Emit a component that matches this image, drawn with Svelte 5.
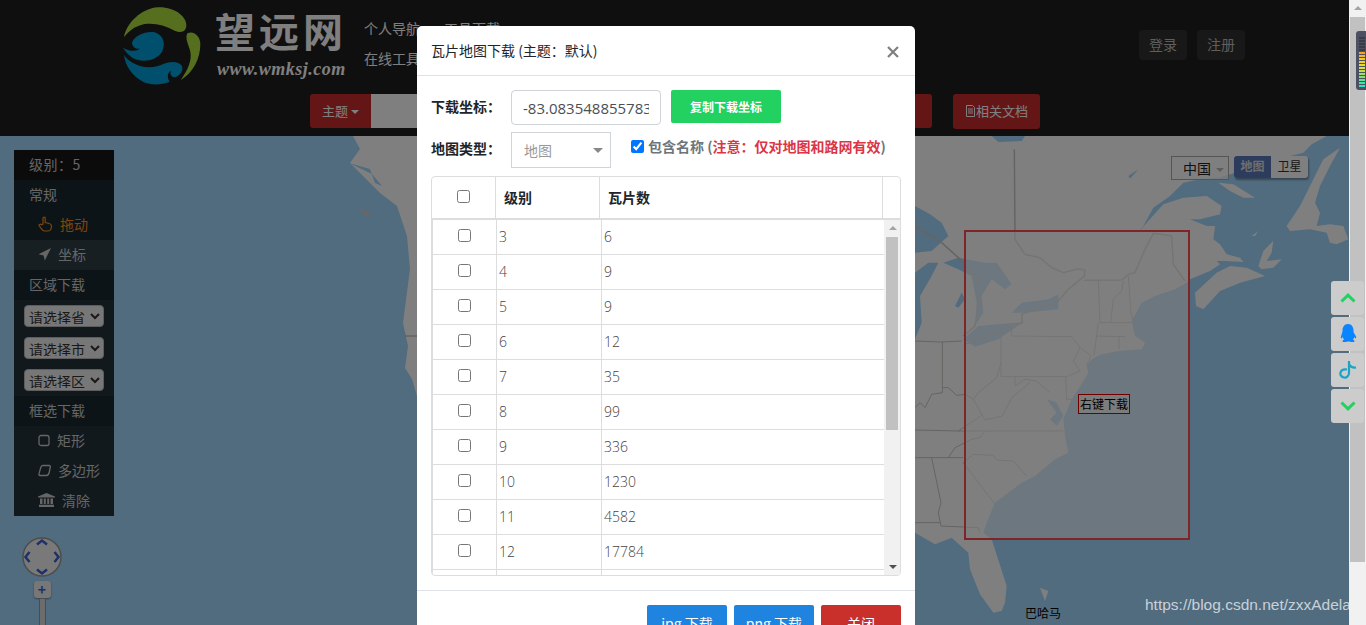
<script>
  // map outlines below were read off the screenshot at 3x, hence the helpers
  const east = (pts) => pts.map(([x, y]) => `${915 + x / 3},${y / 3}`);
  const ne = (pts) => pts.map(([x, y]) => `${1130 + x / 3},${y / 3}`);
  const poly = (pts) => east(pts).join(' ');
  const polyNe = (pts) => ne(pts).join(' ');

  const land = [
    '353,0', '360,13', '350,27', '380,57', '397,70', '407,100', '410,133', '403,187', '408,210', '405,232', '412,243', '417,260',
    '500,400',
    ...east([[0, 1190], [60, 1225], [110, 1205], [160, 1250], [165, 1300], [195, 1375], [235, 1430], [260, 1425], [270, 1400], [275, 1350], [230, 1210], [205, 1190], [215, 1160], [240, 1100], [320, 1040], [360, 1020], [420, 970], [460, 950], [450, 900], [445, 850], [470, 790], [490, 760], [520, 710], [515, 690], [530, 670], [560, 655], [610, 645], [680, 640], [690, 620], [660, 600], [650, 555], [680, 500], [720, 480], [780, 460], [815, 440]]),
    ...ne([[180, 430], [240, 405], [270, 385], [260, 375], [285, 375], [340, 378], [330, 365], [290, 355], [270, 325], [250, 310], [255, 270], [230, 270], [180, 250], [210, 250], [270, 235], [275, 210], [230, 180], [160, 185], [100, 205], [50, 260], [-5, 325], [40, 270], [70, 215], [120, 180], [160, 140], [210, 130], [265, 125], [350, 100], [430, 85], [480, 60], [520, 50], [545, 25], [590, 0]])
  ].join(' ');

  // Great Lakes and the small bays
  const waters = [
    [[230, 0], [330, 0], [320, 15], [250, 18]],
    [[0, 210], [45, 235], [80, 260], [100, 300], [50, 345], [0, 350]],
    [[0, 410], [40, 380], [70, 380], [50, 420], [15, 480], [20, 560], [0, 610]],
    [[85, 380], [130, 365], [210, 380], [245, 380], [290, 445], [270, 460], [230, 430], [200, 480], [205, 530], [180, 570], [185, 500], [170, 420], [130, 400]],
    [[120, 510], [140, 470], [150, 490], [130, 515]],
    [[145, 610], [190, 570], [325, 558], [250, 610], [180, 632]],
    [[290, 530], [320, 500], [400, 490], [430, 475], [430, 520], [330, 530]],
    [[395, 790], [425, 800], [445, 840], [425, 870], [405, 850], [425, 830]],
    [[640, 120], [670, 100], [645, 128]]
  ];
  const cuba = [[375, 1355], [400, 1365], [390, 1395]];
  const islands = [
    [[195, 470], [260, 410], [300, 390], [350, 395], [405, 420], [330, 440], [270, 465], [220, 520], [198, 510]],
    [[470, 270], [510, 210], [540, 150], [580, 70], [630, 35], [600, 90], [570, 150], [555, 200], [570, 230], [560, 270], [600, 265], [640, 270], [655, 310], [620, 325], [600, 320], [590, 290], [540, 280], [480, 285]],
    [[265, 140], [310, 145], [375, 185], [340, 185], [300, 165]],
    [[385, 390], [400, 345], [430, 315], [425, 350], [410, 375], [455, 370], [430, 395], [395, 400]],
    [[365, 300], [385, 285], [375, 300]]
  ];

  const lines = [
    [[298, 40], [300, 310], [330, 355], [375, 365], [410, 395], [445, 410], [490, 398], [510, 402], [508, 420], [460, 460], [425, 500], [390, 510], [320, 535], [322, 560], [240, 590], [150, 625]],
    [[0, 270], [80, 320], [130, 365], [185, 420], [190, 500], [180, 570], [145, 600]],
    [[508, 433], [620, 432], [640, 415], [660, 410], [690, 340], [715, 292], [770, 300], [775, 385], [810, 435]],
    [[550, 433], [555, 560], [650, 560]],
    [[625, 435], [620, 465], [595, 490], [587, 560]],
    [[640, 420], [648, 530], [655, 560]],
    [[290, 575], [290, 600], [470, 602], [495, 635], [475, 675], [495, 705], [455, 722], [258, 722], [258, 600]],
    [[550, 560], [537, 660]],
    [[540, 600], [630, 602]],
    [[612, 600], [612, 640]],
    [[495, 635], [527, 658], [515, 690]],
    [[300, 722], [300, 750], [330, 730], [365, 735], [405, 770]],
    [[452, 722], [455, 790], [480, 790]],
    [[258, 680], [245, 725], [190, 770], [175, 790], [210, 852], [262, 840], [290, 785], [345, 740]],
    [[0, 882], [130, 885], [200, 838]],
    [[130, 885], [445, 885]],
    [[0, 965], [100, 965], [120, 935], [170, 910], [195, 905], [210, 885]],
    [[100, 965], [145, 965]],
    [[145, 980], [175, 955], [235, 958], [245, 972], [295, 975], [335, 1020]],
    [[145, 980], [240, 1105]],
    [[50, 965], [78, 1100], [70, 1130], [78, 1170], [190, 1175], [195, 1190]],
    [[0, 615], [80, 618], [140, 615]],
    [[82, 618], [82, 770], [50, 775], [30, 815], [15, 800], [0, 815]],
    [[82, 755], [100, 755], [125, 778], [150, 775], [175, 790]],
    [[0, 1160], [75, 1160]]
  ];

  const rows = [
    [3, 6], [4, 9], [5, 9], [6, 12], [7, 35], [8, 99], [9, 336], [10, 1230], [11, 4582], [12, 17784], ['', '']
  ];

  const meter = ['#3a3d47', '#3a3d47', '#3a3d47', '#3a3d47', '#3a3d47', '#f5a623', '#f5b623', '#f5c823', '#f0d020', '#e8dc30', '#d8e040', '#b8e050', '#a0e060', '#80e070', '#60e090', '#40e0b0', '#30e0c0'];
</script>

<div class="page">
  <div class="content">
    <header class="top">
      <div class="logo">
        <svg class="swirl" width="80" height="80" viewBox="15 15 240 240">
          <path fill="#acde3e" d="M18 112C25 70 70 25 120 22c50-2 85 28 85 53 0 20-15 25-35 17-30-17-60-24-90-20-30 6-50 23-62 40z" />
          <path fill="#acde3e" d="M208 100c17-8 37 5 39 30 1 45-22 90-59 110 22-30 34-60 29-85-5-20-17-40-9-55z" />
          <path fill="#009eda" d="M42 128c8-23 43-36 68-31 25 8 35 33 22 58-14 25-57 35-87 20-10-7-23-20-30-32 15 9 40 15 50 2-10 5-23-5-23-17z" />
          <path fill="#009eda" d="M18 165c17 25 57 45 102 33 30-13 55-18 70-3 8 13 0 30-18 37-10 0-20-10-12-20-10 3-15 18-5 33-25 10-55 12-80 0-30-15-53-45-57-80z" />
        </svg>
        <div class="brand">
          <span class="brand-name">望远网</span>
          <span class="brand-url">www.wmksj.com</span>
        </div>
      </div>
      <div class="links">
        <div class="link-row"><span>个人导航</span><span>工具下载</span></div>
        <div class="link-row"><span>在线工具</span></div>
      </div>
      <div class="account">
        <button class="ghost">登录</button>
        <button class="ghost">注册</button>
      </div>
    </header>

    <nav class="bar">
      <button class="red theme">主题<i class="caret"></i></button>
      <input class="search" type="text" />
      <button class="red tool">工具</button>
      <button class="red doc">
        <svg width="11" height="12" viewBox="0 0 11 12"><path fill="none" stroke="currentColor" d="M1.500.5h6l2 2v9h-8zM3 4h5M3 6h5M3 8h5" /></svg>相关文档
      </button>
    </nav>

    <section class="map">
      <svg class="tiles" width="1349" height="489" viewBox="0 0 1349 489">
        <rect width="1349" height="489" fill="#a3d7ff" />
        <polygon points={land} fill="#ffffff" />
        <polygon points={poly(cuba)} fill="#ffffff" />
        {#each islands as s}
          <polygon points={polyNe(s)} fill="#ffffff" />
        {/each}
        {#each waters as w}
          <polygon points={poly(w)} fill="#a3d7ff" />
        {/each}
        <polygon points="358,72 372,77 366,80" fill="#cfcfcf" />
        <polygon points="349,27 370,33 375,47 382,50 372,38" fill="#a3d7ff" />
        {#each lines as l, i}
          <polyline points={poly(l)} fill="none" stroke="#cdc9c3" stroke-width={i < 3 ? 1.5 : 1} />
        {/each}
        <polyline points="405,200 420,200" fill="none" stroke="#b0aca8" />
        <rect class="area" x="965" y="95" width="224" height="308" />
      </svg>

      <span class="area-tip">右键下载</span>
      <span class="place">巴哈马</span>

      <aside class="panel">
        <div class="p-level">级别：5</div>
        <div class="p-head">常规</div>
        <div class="p-item on">
          <svg width="15" height="16" viewBox="0 0 15 16"><path fill="none" stroke="currentColor" stroke-width="1.200" d="M5 8V2.200c0-1.600 2.200-1.600 2.200 0V6.500l4 1c1.500.4 2.300 1.200 2.300 2.700 0 1.500-.3 2.500-.8 3.300-.5 1-1.200 1.500-2.700 1.500H6.500c-1.300 0-2-.7-2.800-1.800L1.300 10c-.8-1.300 1-2.500 2-1.300z" /></svg>
          拖动
        </div>
        <div class="p-item hover">
          <svg width="13" height="13" viewBox="0 0 13 13"><path fill="currentColor" d="M13 0 6.800 12.500 5.600 7.400.5 6.200z" /></svg>
          坐标
        </div>
        <div class="p-head">区域下载</div>
        <div class="p-selects">
          <select><option>请选择省</option></select>
          <select><option>请选择市</option></select>
          <select><option>请选择区</option></select>
        </div>
        <div class="p-head">框选下载</div>
        <div class="p-item">
          <svg width="12" height="13" viewBox="0 0 12 13"><rect x="1" y="1.500" width="10" height="10" rx="2" fill="none" stroke="currentColor" stroke-width="1.300" /></svg>
          矩形
        </div>
        <div class="p-item">
          <svg width="13" height="13" viewBox="0 0 13 13"><path fill="none" stroke="currentColor" stroke-width="1.300" d="M5 1.500h6c1 0 1.500.6 1.300 1.500l-1 5c-.5 2.500-1.500 3.500-3 3.500H2c-1 0-1.300-.7-1-1.500.5-2 .8-3 1.200-4.500C2.700 3 3.500 1.500 5 1.500z" /></svg>
          多边形
        </div>
        <div class="p-item">
          <svg width="17" height="14" viewBox="0 0 17 14"><path fill="currentColor" d="M8.500 0 17 3.500v1H0v-1zM2 5.500h2.500V11H2zM5.800 5.500h2V11h-2zM9.200 5.500h2V11h-2zM12.500 5.500H15V11h-2.500zM1 11.800h15V14H1z" /></svg>
          清除
        </div>
      </aside>

      <div class="pan">
        <svg width="40" height="40" viewBox="0 0 40 40">
          <circle cx="20" cy="20" r="19" fill="#f2f2f2" stroke="#999" stroke-width="1.500" />
          <path fill="none" stroke="#3a62d0" stroke-width="2.500" d="M15 7.500l5-4 5 4M15 32.500l5 4 5-4M7.500 15l-4 5 4 5M32.500 15l4 5-4 5" />
        </svg>
        <div class="zoom-plus">+</div>
        <div class="zoom-track"></div>
      </div>

      <div class="map-switch">
        <div class="region">中国<i class="caret grey"></i></div>
        <div class="layers"><span class="cur">地图</span><span>卫星</span></div>
      </div>

      <span class="watermark">https://blog.csdn.net/zxxAdelai</span>
    </section>

    <div class="backdrop"></div>

    <div class="modal">
      <div class="m-head">
        <span>瓦片地图下载 (主题：默认)</span>
        <svg class="close" width="12" height="12" viewBox="0 0 12 12"><path stroke="#7f7f7f" stroke-width="2.200" d="M1 1l10 10M11 1 1 11" /></svg>
      </div>
      <div class="m-body">
        <div class="f-row">
          <label for="coords">下载坐标：</label>
          <input id="coords" class="coords" type="text" value="-83.083548855783406" readonly />
          <button class="copy">复制下载坐标</button>
        </div>
        <div class="f-row second">
          <span class="lab">地图类型：</span>
          <div class="fake-select">地图<i class="caret grey"></i></div>
          <label class="check">
            <input type="checkbox" checked />
            <span>包含名称 (<em>注意：仅对地图和路网有效</em>)</span>
          </label>
        </div>

        <div class="table">
          <div class="t-head">
            <div class="c0"><input type="checkbox" /></div>
            <div class="c1">级别</div>
            <div class="c2">瓦片数</div>
          </div>
          <div class="t-scroll">
            <div class="t-rows">
              {#each rows as r}
                <div class="t-row">
                  <div class="b0">{#if r[0] !== ''}<input type="checkbox" />{/if}</div>
                  <div class="b1">{r[0]}</div>
                  <div class="b2">{r[1]}</div>
                </div>
              {/each}
            </div>
            <div class="t-bar">
              <i class="up"></i>
              <b></b>
              <i class="down"></i>
            </div>
          </div>
        </div>
      </div>
      <div class="m-foot">
        <button class="blue">jpg 下载</button>
        <button class="blue">png 下载</button>
        <button class="shut">关闭</button>
      </div>
    </div>
  </div>

  <div class="scrollbar">
    <i class="up"></i>
    <b></b>
  </div>

  <div class="meter">
    {#each meter as c}
      <span style="background:{c}"></span>
    {/each}
  </div>

  <div class="side">
    <button aria-label="top"><svg width="16" height="10" viewBox="0 0 16 10"><path fill="none" stroke="#22d160" stroke-width="3" d="M1.500 8.500 8 2.200l6.500 6.300" /></svg></button>
    <button aria-label="qq"><svg width="18" height="20" viewBox="0 0 18 20"><path fill="#0a84ff" d="M9 0c4 0 5.500 3.500 5.500 6.500 0 1 0 1.500.5 2.500l2 3.500c.5 1.500 0 2.500-1 1.500l-.8-1c-.2 1.200-.7 2-1.200 2.700 1 .4 1.800 1 1.500 1.700-.4.800-3 .9-4.500.3-.5-.2-.5-.3-1.500-.3s-1 .1-1.500.3c-1.500.6-4.100.5-4.500-.3-.3-.7.500-1.300 1.500-1.700-.5-.7-1-1.500-1.200-2.700l-.8 1c-1 1-1.500 0-1-1.500L3 9c.5-1 .5-1.500.5-2.500C3.500 3.500 5 0 9 0z" /></svg></button>
    <button aria-label="tiktok"><svg width="18" height="20" viewBox="0 0 18 20"><path fill="none" stroke="#1ba3c6" stroke-width="2.200" d="M10 1v12c0 3-2.500 5-5 4.500C2.500 17 .800 15 1.500 12.500 2.200 10 5 9 8 9.500M10 4c1 2 3 4 7 3.500" /></svg></button>
    <button aria-label="bottom"><svg width="16" height="10" viewBox="0 0 16 10"><path fill="none" stroke="#22d160" stroke-width="3" d="M1.500 1.500 8 7.800l6.500-6.300" /></svg></button>
  </div>
</div>

<style>
  :global(body) {
    margin: 0;
    overflow: hidden;
  }

  .page {
    position: relative;
    display: flex;
    height: 625px;
    overflow: hidden;
    font-family: "Noto Sans CJK SC", "Liberation Sans", sans-serif;
    font-size: 14px;
  }

  .content {
    position: relative;
    display: flex;
    flex-direction: column;
    width: 1349px;
    height: 625px;
    overflow: hidden;
    background: #1e1e1e;
  }

  .top {
    display: flex;
    height: 94px;
    padding-left: 123px;
    box-sizing: border-box;
    color: #fff;
  }

  .logo {
    display: flex;
    width: 222px;
    padding-top: 5px;
  }

  .swirl {
    flex: none;
    margin-right: 12px;
  }

  .brand {
    display: flex;
    flex-direction: column;
    white-space: nowrap;
  }

  .brand-name {
    height: 53px;
    font-size: 40px;
    line-height: 50px;
    font-weight: 700;
    letter-spacing: 4px;
  }

  .brand-url {
    padding-left: 2px;
    font-family: "Liberation Serif", serif;
    font-style: italic;
    font-weight: 700;
    font-size: 18px;
    line-height: 22px;
    letter-spacing: 0.5px;
  }

  .links {
    margin-left: 19px;
    padding-top: 13px;
    color: #fff;
  }

  .link-row {
    display: flex;
    gap: 24px;
    height: 30px;
    line-height: 30px;
  }

  .account {
    display: flex;
    gap: 10px;
    margin-left: auto;
    margin-right: 104px;
    padding-top: 30px;
  }

  .ghost {
    width: 48px;
    height: 30px;
    padding: 0 0 2px;
    border: 0;
    border-radius: 4px;
    background: #303030;
    color: #bdbdbd;
    font: inherit;
  }

  .bar {
    display: flex;
    height: 42px;
    padding-left: 310px;
    box-sizing: border-box;
  }

  .red {
    height: 34px;
    padding: 0 0 2px;
    border: 0;
    background: #c92c2c;
    color: #fff;
    font: inherit;
    font-size: 13px;
    border-radius: 3px;
  }

  .theme {
    width: 61px;
    border-radius: 3px 0 0 3px;
  }

  .caret {
    display: inline-block;
    margin-left: 3px;
    vertical-align: middle;
    border-top: 4px solid #fff;
    border-left: 4px solid transparent;
    border-right: 4px solid transparent;
  }

  .search {
    width: 459px;
    height: 34px;
    padding: 0;
    border: 0;
    background: #fff;
    box-sizing: border-box;
  }

  .tool {
    width: 87px;
    margin-left: 15px;
  }

  .doc {
    display: flex;
    align-items: center;
    justify-content: center;
    width: 87px;
    margin-left: 21px;
    height: 35px;
  }

  .map {
    position: relative;
    flex: 1;
  }

  .tiles {
    position: absolute;
    inset: 0;
    display: block;
  }

  .area {
    fill: rgba(255, 255, 255, 0.6);
    stroke: #ff4a50;
    stroke-width: 2;
  }

  .area-tip {
    position: absolute;
    left: 1078px;
    top: 258px;
    width: 50px;
    height: 18px;
    border: 1px solid #e00000;
    background: #f8f8f8;
    color: #000;
    font-size: 12px;
    line-height: 17px;
    text-align: center;
  }

  .place {
    position: absolute;
    left: 1025px;
    top: 469px;
    color: #000;
    font-size: 12px;
    line-height: 16px;
  }

  .panel {
    position: absolute;
    left: 14px;
    top: 14px;
    width: 100px;
    background: #23323b;
    color: #ccc;
  }

  .p-level {
    height: 30px;
    padding-left: 15px;
    line-height: 28px;
    background: #161616;
    letter-spacing: 0.5px;
  }

  .p-head {
    height: 30px;
    padding-left: 15px;
    line-height: 28px;
    background: #1a2830;
  }

  .p-item {
    display: flex;
    align-items: center;
    gap: 7px;
    box-sizing: border-box;
    height: 30px;
    padding: 0 0 2px 24px;
  }

  .p-item.on {
    color: #ff8a14;
    background: #1a2830;
  }

  .p-item.hover {
    background: #2f3e47;
  }

  .p-selects {
    display: flex;
    flex-direction: column;
    gap: 10px;
    padding: 5px 10px;
  }

  .p-selects select {
    width: 80px;
    height: 22px;
    padding: 0 0 2px;
    border: 1px solid #bbb;
    border-radius: 4px;
    background-color: #efefef;
    color: #333;
    font: inherit;
    font-size: 14px;
  }

  .pan {
    position: absolute;
    left: 22px;
    top: 401px;
    display: flex;
    flex-direction: column;
    align-items: center;
    width: 40px;
  }

  .zoom-plus {
    width: 17px;
    height: 17px;
    margin-top: 4px;
    border-radius: 3px;
    background: #eee;
    color: #3a62d0;
    font-weight: 700;
    line-height: 16px;
    text-align: center;
    box-shadow: 0 1px 2px rgba(0, 0, 0, 0.4);
  }

  .zoom-track {
    width: 5px;
    height: 40px;
    background: #d8d8d8;
    border: 1px solid #999;
  }

  .map-switch {
    position: absolute;
    left: 1171px;
    top: 20px;
    display: flex;
    gap: 5px;
  }

  .region {
    box-sizing: border-box;
    width: 58px;
    height: 24px;
    padding-left: 11px;
    border: 1px solid #aaa;
    color: #222;
    line-height: 22px;
    background: rgba(255, 255, 255, 0.7);
  }

  .caret.grey {
    border-top-color: #bbb;
    margin-left: 5px;
  }

  .layers {
    display: flex;
    height: 22px;
    border-radius: 3px;
    background: #fff;
    box-shadow: 1px 2px 2px rgba(0, 0, 0, 0.35);
    font-size: 12px;
    line-height: 20px;
    color: #333;
  }

  .layers span {
    width: 37px;
    text-align: center;
  }

  .layers .cur {
    border-radius: 3px 0 0 3px;
    background: #5a78b8;
    color: #ddd;
    font-weight: 700;
  }

  .watermark {
    position: absolute;
    left: 1145px;
    top: 460px;
    color: rgba(255, 255, 255, 0.7);
    font-family: "Liberation Sans", sans-serif;
    font-size: 15.5px;
    line-height: 18px;
    white-space: nowrap;
    z-index: 3;
  }

  .backdrop {
    position: absolute;
    inset: 0;
    z-index: 2;
    background: rgba(0, 0, 0, 0.5);
  }

  .modal {
    position: absolute;
    left: 417px;
    top: 26px;
    z-index: 4;
    display: flex;
    flex-direction: column;
    width: 498px;
    border-radius: 5px 5px 0 0;
    background: #fff;
    color: #212529;
  }

  .m-head {
    display: flex;
    align-items: center;
    justify-content: space-between;
    height: 47px;
    padding: 0 16px 2px 14px;
    border-bottom: 1px solid #dee2e6;
    font-size: 14px;
  }

  .close {
    margin-top: 5px;
  }

  .m-body {
    padding: 14px 14px 14px;
    border-bottom: 1px solid #dee2e6;
  }

  .f-row {
    display: flex;
    align-items: flex-start;
    font-size: 14px;
    font-weight: 700;
  }

  .f-row label[for],
  .f-row .lab {
    width: 80px;
    line-height: 33px;
  }

  .coords {
    box-sizing: border-box;
    width: 150px;
    height: 35px;
    padding: 0 11px;
    border: 1px solid #ced4da;
    border-radius: 4px;
    color: #495057;
    font-family: "Open Sans", sans-serif;
    font-size: 15px;
    outline: none;
  }

  .copy {
    width: 110px;
    height: 33px;
    margin-left: 10px;
    padding: 0;
    border: 0;
    border-radius: 2px;
    background: #22d160;
    color: #fff;
    font: inherit;
    font-size: 12px;
    font-weight: 700;
  }

  .second {
    margin-top: 7px;
  }

  .second .lab {
    line-height: 33px;
  }

  .fake-select {
    box-sizing: border-box;
    width: 100px;
    height: 36px;
    padding-left: 12px;
    border: 1px solid #ced4da;
    color: #999;
    font-size: 14px;
    font-weight: 400;
    line-height: 35px;
  }

  .fake-select .caret {
    margin-left: 41px;
    margin-top: -3px;
    border-top-color: #888;
    border-top-width: 5px;
    border-left-width: 5px;
    border-right-width: 5px;
  }

  .check {
    display: flex;
    align-items: center;
    margin: 6px 0 0 20px;
    height: 16px;
    color: #6c757d;
    white-space: nowrap;
  }

  .check input {
    width: 13px;
    height: 13px;
    margin: 0 4px 0 0;
  }

  .check em {
    font-style: normal;
    color: #dc3545;
  }

  .table {
    display: flex;
    flex-direction: column;
    margin-top: 8px;
    width: 470px;
    height: 400px;
    box-sizing: border-box;
    border: 1px solid #ddd;
    border-radius: 4px;
    overflow: hidden;
  }

  .t-head {
    display: flex;
    flex: none;
    height: 43px;
    box-sizing: border-box;
    border-bottom: 2px solid #ddd;
    font-size: 14px;
    font-weight: 700;
    line-height: 41px;
  }

  .t-head > div {
    box-sizing: border-box;
    border-right: 1px solid #ddd;
  }

  .c0 {
    display: flex;
    align-items: center;
    justify-content: center;
    width: 64px;
    padding-bottom: 2px;
  }

  .c1 {
    width: 104px;
    padding-left: 8px;
  }

  .c2 {
    width: 283px;
    padding-left: 8px;
  }

  .t-head input,
  .b0 input {
    width: 13px;
    height: 13px;
    margin: 0;
  }

  .t-scroll {
    display: flex;
    flex: 1;
    min-height: 0;
  }

  .t-rows {
    width: 451px;
    overflow: hidden;
    border-left: 1px solid #ddd;
  }

  .t-row {
    display: flex;
    flex: none;
    height: 35px;
    box-sizing: border-box;
    border-bottom: 1px solid #ddd;
    color: #444;
    font-family: "Open Sans", sans-serif;
    font-size: 14px;
    font-weight: 300;
    line-height: 33px;
  }

  .b0 {
    display: flex;
    align-items: center;
    justify-content: center;
    box-sizing: border-box;
    width: 64px;
    padding-bottom: 3px;
    border-right: 1px solid #ddd;
  }

  .b1 {
    box-sizing: border-box;
    width: 105px;
    padding-left: 2px;
    border-right: 1px solid #ddd;
  }

  .b2 {
    padding-left: 2px;
  }

  .t-bar {
    position: relative;
    flex: 1;
    background: #f1f1f1;
  }

  .t-bar b {
    position: absolute;
    left: 2px;
    right: 2px;
    top: 17px;
    height: 193px;
    background: #c1c1c1;
  }

  .up,
  .down {
    position: absolute;
    left: 5px;
    border-left: 4px solid transparent;
    border-right: 4px solid transparent;
  }

  .up {
    top: 6px;
    border-bottom: 4px solid #a3a3a3;
  }

  .down {
    bottom: 6px;
    border-top: 4px solid #505050;
  }

  .m-foot {
    display: flex;
    justify-content: flex-end;
    gap: 7px;
    padding: 14px 14px 14px;
  }

  .m-foot button {
    width: 80px;
    height: 36px;
    padding: 0;
    border: 0;
    border-radius: 2px;
    color: #fff;
    font: inherit;
    font-size: 14px;
  }

  .blue {
    background: #1e84e0;
  }

  .shut {
    background: #c9302c;
  }

  .scrollbar {
    position: relative;
    width: 17px;
    background: #f1f1f1;
  }

  .scrollbar b {
    position: absolute;
    left: 1px;
    right: 1px;
    top: 17px;
    height: 545px;
    background: #c1c1c1;
  }

  .meter {
    position: absolute;
    left: 1356px;
    top: 31px;
    display: flex;
    flex-direction: column;
    gap: 1px;
    box-sizing: border-box;
    width: 12px;
    height: 59px;
    padding: 6px 0 0 3px;
    border-radius: 3px 0 0 3px;
    background: #4d5060;
    z-index: 5;
  }

  .meter span {
    width: 6px;
    height: 2px;
  }

  .side {
    position: absolute;
    left: 1331px;
    top: 281px;
    display: flex;
    flex-direction: column;
    gap: 2px;
    z-index: 5;
  }

  .side button {
    display: flex;
    align-items: center;
    justify-content: center;
    width: 33px;
    height: 34px;
    padding: 0;
    border: 0;
    border-radius: 3px;
    background: #ccc;
  }
</style>
